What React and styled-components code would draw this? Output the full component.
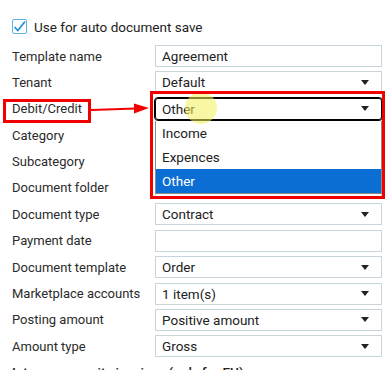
import { Fragment } from 'react';
import styled, { createGlobalStyle } from 'styled-components';

const GlobalStyle = createGlobalStyle`
  html, body {
    margin: 0;
    padding: 0;
    background: #fff;
  }
  body {
    font-family: Roboto, "Liberation Sans", sans-serif;
    font-size: 13px;
    color: #222;
  }
`;

const Page = styled.div`
  position: relative;
  width: 390px;
  height: 370px;
  overflow: hidden;
  padding: 19px 0 0 12px;
  box-sizing: border-box;
`;

const CheckRow = styled.label`
  display: flex;
  align-items: center;
  gap: 7px;
  height: 15px;
  font-size: 13.5px;
  color: #222;
`;

const Box = styled.span`
  display: flex;
  width: 15px;
  height: 15px;
  box-sizing: border-box;
  border: 1px solid #5ab4e6;
  border-radius: 2px;
  svg {
    display: block;
  }
`;

const Form = styled.div`
  display: grid;
  grid-template-columns: 143px 227px;
  grid-auto-rows: 22px;
  row-gap: 4.4px;
  margin-top: 11px;
`;

const Label = styled.div`
  position: relative;
  display: flex;
  align-items: center;
  color: #2b2b2b;
  white-space: nowrap;
`;

const Field = styled.div`
  position: relative;
  display: flex;
  align-items: center;
  justify-content: space-between;
  box-sizing: border-box;
  height: 22px;
  padding: 0 12px 0 6px;
  border: 1px solid ${p => (p.$focused ? '#000' : '#c9d5dc')};
  border-radius: ${p => (p.$focused ? '3px' : '0')};
  outline: ${p => (p.$focused ? '1px solid #000' : 'none')};
  background: #fff;
  color: #222;
  font-size: 13.5px;
  z-index: ${p => (p.$focused ? 2 : 0)};
`;

const Caret = styled.span`
  width: 0;
  height: 0;
  border-left: 4px solid transparent;
  border-right: 4px solid transparent;
  border-top: 5px solid #222;
`;

const List = styled.ul`
  position: absolute;
  left: -1px;
  right: -1px;
  top: 22px;
  margin: 0;
  padding: 0;
  list-style: none;
  background: #fff;
  border: 1px solid #8c8c8c;
  border-top: none;
  z-index: 3;
`;

const Option = styled.li`
  height: 24px;
  display: flex;
  align-items: center;
  padding-left: 6px;
  font-size: 13.5px;
  background: ${p => (p.$active ? '#0b6ed4' : '#fff')};
  color: ${p => (p.$active ? '#fff' : '#222')};
`;

/* red annotation frames drawn over the form */
const SelectFrame = styled.div`
  position: absolute;
  left: -6px;
  right: -4px;
  top: -8px;
  height: 108px;
  box-sizing: border-box;
  border: 3px solid #f20000;
  pointer-events: none;
  z-index: 5;
`;

const LabelFrame = styled.div`
  position: absolute;
  left: -9px;
  top: 1px;
  width: 88px;
  height: 24px;
  box-sizing: border-box;
  border: 3px solid #f20000;
  pointer-events: none;
`;

const Arrow = styled.svg`
  position: absolute;
  left: 78px;
  top: 4px;
  z-index: 5;
`;

const Pointer = styled.div`
  position: absolute;
  left: 29px;
  top: -7px;
  width: 32px;
  height: 32px;
  border-radius: 50%;
  background: rgba(245, 240, 90, 0.55);
  z-index: 4;
`;

const Footer = styled.div`
  margin-top: 7px;
  font-weight: 500;
  font-size: 13.5px;
  color: #222;
`;

const rows = [
  { label: 'Template name', value: 'Agreement', select: false },
  { label: 'Tenant', value: 'Default', select: true },
  { label: 'Debit/Credit', value: 'Other', select: true, focused: true },
  { label: 'Category', value: '', select: true },
  { label: 'Subcategory', value: '', select: true },
  { label: 'Document folder', value: '', select: true },
  { label: 'Document type', value: 'Contract', select: true },
  { label: 'Payment date', value: '', select: false },
  { label: 'Document template', value: 'Order', select: true },
  { label: 'Marketplace accounts', value: '1 item(s)', select: true },
  { label: 'Posting amount', value: 'Positive amount', select: true },
  { label: 'Amount type', value: 'Gross', select: true },
];

const options = ['Income', 'Expences', 'Other'];

const App = () => {
  return (
    <Page>
      <GlobalStyle />
      <CheckRow>
        <Box>
          <svg width="13" height="13" viewBox="0 0 13 13">
            <path d="M1.5 7 L4.8 10.5 L12 1.5" fill="none" stroke="#1a8ed8" strokeWidth="1.6" />
          </svg>
        </Box>
        Use for auto document save
      </CheckRow>
      <Form>
        {rows.map(row => (
          <Fragment key={row.label}>
            <Label>
              {row.label}
              {row.focused && (
                <>
                  <LabelFrame />
                  <Arrow width="62" height="14" viewBox="0 0 62 14">
                    <line x1="1" y1="8" x2="46" y2="6.5" stroke="#f20000" strokeWidth="2.2" />
                    <path d="M44 1.5 L59 6 L44 11.5 Z" fill="#f20000" />
                  </Arrow>
                </>
              )}
            </Label>
            <Field $focused={row.focused}>
              <span>{row.value}</span>
              {row.select && <Caret />}
              {row.focused && (
                <>
                  <Pointer />
                  <List>
                    {options.map(o => (
                      <Option key={o} $active={o === 'Other'}>
                        {o}
                      </Option>
                    ))}
                  </List>
                  <SelectFrame />
                </>
              )}
            </Field>
          </Fragment>
        ))}
      </Form>
      <Footer>Intra-community invoices (only for EU)</Footer>
    </Page>
  );
};

export default App;
